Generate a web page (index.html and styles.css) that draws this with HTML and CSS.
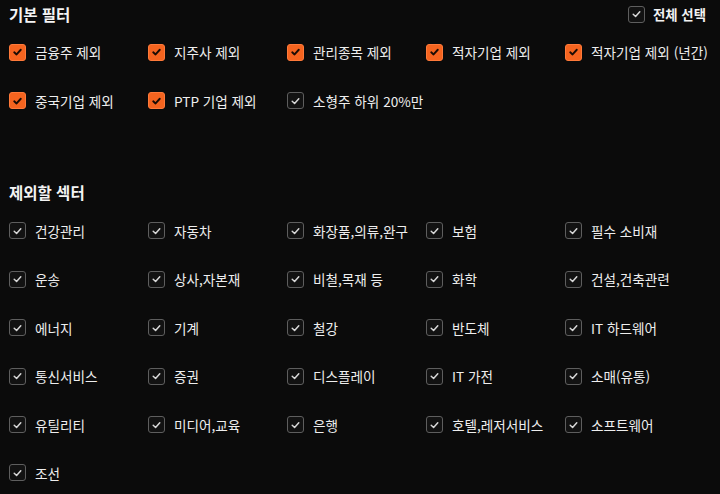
FILE: index.html
```html
<!DOCTYPE html>
<html lang="ko">
<head>
<meta charset="utf-8">
<link rel="stylesheet" href="styles.css">
</head>
<body>
<div class="page">
  <div class="head">
    <h2 class="title">기본 필터</h2>
    <label class="all"><span class="box off"><svg viewBox="0 0 16 16"><polyline points="4.5,8.3 7,10.6 11.5,5.6"/></svg></span>전체 선택</label>
  </div>
  <div class="grid">
    <label class="item"><span class="box on"><svg viewBox="0 0 16 16"><polyline points="4.5,8.3 7,10.6 11.5,5.6"/></svg></span>금융주 제외</label>
    <label class="item"><span class="box on"><svg viewBox="0 0 16 16"><polyline points="4.5,8.3 7,10.6 11.5,5.6"/></svg></span>지주사 제외</label>
    <label class="item"><span class="box on"><svg viewBox="0 0 16 16"><polyline points="4.5,8.3 7,10.6 11.5,5.6"/></svg></span>관리종목 제외</label>
    <label class="item"><span class="box on"><svg viewBox="0 0 16 16"><polyline points="4.5,8.3 7,10.6 11.5,5.6"/></svg></span>적자기업 제외</label>
    <label class="item"><span class="box on"><svg viewBox="0 0 16 16"><polyline points="4.5,8.3 7,10.6 11.5,5.6"/></svg></span>적자기업 제외 (년간)</label>
    <label class="item"><span class="box on"><svg viewBox="0 0 16 16"><polyline points="4.5,8.3 7,10.6 11.5,5.6"/></svg></span>중국기업 제외</label>
    <label class="item"><span class="box on"><svg viewBox="0 0 16 16"><polyline points="4.5,8.3 7,10.6 11.5,5.6"/></svg></span>PTP 기업 제외</label>
    <label class="item"><span class="box off"><svg viewBox="0 0 16 16"><polyline points="4.5,8.3 7,10.6 11.5,5.6"/></svg></span>소형주 하위 20%만</label>
  </div>
  <h2 class="title sector">제외할 섹터</h2>
  <div class="grid">
    <label class="item"><span class="box off"><svg viewBox="0 0 16 16"><polyline points="4.5,8.3 7,10.6 11.5,5.6"/></svg></span>건강관리</label>
    <label class="item"><span class="box off"><svg viewBox="0 0 16 16"><polyline points="4.5,8.3 7,10.6 11.5,5.6"/></svg></span>자동차</label>
    <label class="item"><span class="box off"><svg viewBox="0 0 16 16"><polyline points="4.5,8.3 7,10.6 11.5,5.6"/></svg></span>화장품,의류,완구</label>
    <label class="item"><span class="box off"><svg viewBox="0 0 16 16"><polyline points="4.5,8.3 7,10.6 11.5,5.6"/></svg></span>보험</label>
    <label class="item"><span class="box off"><svg viewBox="0 0 16 16"><polyline points="4.5,8.3 7,10.6 11.5,5.6"/></svg></span>필수 소비재</label>
    <label class="item"><span class="box off"><svg viewBox="0 0 16 16"><polyline points="4.5,8.3 7,10.6 11.5,5.6"/></svg></span>운송</label>
    <label class="item"><span class="box off"><svg viewBox="0 0 16 16"><polyline points="4.5,8.3 7,10.6 11.5,5.6"/></svg></span>상사,자본재</label>
    <label class="item"><span class="box off"><svg viewBox="0 0 16 16"><polyline points="4.5,8.3 7,10.6 11.5,5.6"/></svg></span>비철,목재 등</label>
    <label class="item"><span class="box off"><svg viewBox="0 0 16 16"><polyline points="4.5,8.3 7,10.6 11.5,5.6"/></svg></span>화학</label>
    <label class="item"><span class="box off"><svg viewBox="0 0 16 16"><polyline points="4.5,8.3 7,10.6 11.5,5.6"/></svg></span>건설,건축관련</label>
    <label class="item"><span class="box off"><svg viewBox="0 0 16 16"><polyline points="4.5,8.3 7,10.6 11.5,5.6"/></svg></span>에너지</label>
    <label class="item"><span class="box off"><svg viewBox="0 0 16 16"><polyline points="4.5,8.3 7,10.6 11.5,5.6"/></svg></span>기계</label>
    <label class="item"><span class="box off"><svg viewBox="0 0 16 16"><polyline points="4.5,8.3 7,10.6 11.5,5.6"/></svg></span>철강</label>
    <label class="item"><span class="box off"><svg viewBox="0 0 16 16"><polyline points="4.5,8.3 7,10.6 11.5,5.6"/></svg></span>반도체</label>
    <label class="item"><span class="box off"><svg viewBox="0 0 16 16"><polyline points="4.5,8.3 7,10.6 11.5,5.6"/></svg></span>IT 하드웨어</label>
    <label class="item"><span class="box off"><svg viewBox="0 0 16 16"><polyline points="4.5,8.3 7,10.6 11.5,5.6"/></svg></span>통신서비스</label>
    <label class="item"><span class="box off"><svg viewBox="0 0 16 16"><polyline points="4.5,8.3 7,10.6 11.5,5.6"/></svg></span>증권</label>
    <label class="item"><span class="box off"><svg viewBox="0 0 16 16"><polyline points="4.5,8.3 7,10.6 11.5,5.6"/></svg></span>디스플레이</label>
    <label class="item"><span class="box off"><svg viewBox="0 0 16 16"><polyline points="4.5,8.3 7,10.6 11.5,5.6"/></svg></span>IT 가전</label>
    <label class="item"><span class="box off"><svg viewBox="0 0 16 16"><polyline points="4.5,8.3 7,10.6 11.5,5.6"/></svg></span>소매(유통)</label>
    <label class="item"><span class="box off"><svg viewBox="0 0 16 16"><polyline points="4.5,8.3 7,10.6 11.5,5.6"/></svg></span>유틸리티</label>
    <label class="item"><span class="box off"><svg viewBox="0 0 16 16"><polyline points="4.5,8.3 7,10.6 11.5,5.6"/></svg></span>미디어,교육</label>
    <label class="item"><span class="box off"><svg viewBox="0 0 16 16"><polyline points="4.5,8.3 7,10.6 11.5,5.6"/></svg></span>은행</label>
    <label class="item"><span class="box off"><svg viewBox="0 0 16 16"><polyline points="4.5,8.3 7,10.6 11.5,5.6"/></svg></span>호텔,레저서비스</label>
    <label class="item"><span class="box off"><svg viewBox="0 0 16 16"><polyline points="4.5,8.3 7,10.6 11.5,5.6"/></svg></span>소프트웨어</label>
    <label class="item"><span class="box off"><svg viewBox="0 0 16 16"><polyline points="4.5,8.3 7,10.6 11.5,5.6"/></svg></span>조선</label>
  </div>
</div>
</body>
</html>
```
FILE: styles.css
```css
html, body {
  margin: 0;
  padding: 0;
  background: #0b0b0b;
}
body {
  font-family: "Noto Sans CJK KR", "Noto Sans", sans-serif;
  color: #eeeeee;
  font-size: 13.6px;
}
.page {
  padding: 0 14px 0 9px;
}
.head {
  height: 28px;
  display: flex;
  align-items: center;
  justify-content: space-between;
}
.title {
  margin: 0;
  font-size: 15.5px;
  font-weight: 700;
  color: #f4f4f4;
  line-height: 28px;
}
.title.sector {
  margin-top: 52px;
  height: 30px;
  line-height: 30px;
}
.all {
  display: flex;
  align-items: center;
  gap: 8px;
  font-weight: 700;
  font-size: 13.4px;
  color: #f2f2f2;
}
.grid {
  display: grid;
  grid-template-columns: repeat(5, 139px);
  grid-auto-rows: 48.4px;
}
.item {
  display: flex;
  align-items: center;
  gap: 9px;
  white-space: nowrap;
}
.box {
  width: 17px;
  height: 17px;
  box-sizing: border-box;
  border-radius: 3px;
  display: flex;
  align-items: center;
  justify-content: center;
  flex: none;
}
.box svg {
  width: 16px;
  height: 16px;
  fill: none;
  stroke-width: 2;
  stroke-linecap: round;
  stroke-linejoin: round;
}
.box.on {
  background: #f5641f;
  border: 1px solid #ff7a3a;
}
.box.on svg {
  stroke: #1a0c05;
}
.box.off {
  background: #121212;
  border: 1.5px solid #5e5e5e;
}
.box.off svg {
  stroke: #d8d8d8;
  stroke-width: 1.6;
}
```
